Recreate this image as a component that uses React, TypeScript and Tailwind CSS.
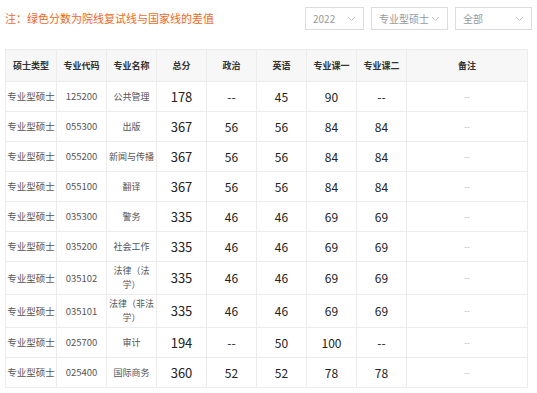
import React from "react";

type Row = {
  type: string;
  code: string;
  name: string[];
  total: string;
  politics: string;
  english: string;
  major1: string;
  major2: string;
  tall?: boolean;
};

const ROWS: Row[] = [
  { type: "专业型硕士", code: "125200", name: ["公共管理"], total: "178", politics: "--", english: "45", major1: "90", major2: "--" },
  { type: "专业型硕士", code: "055300", name: ["出版"], total: "367", politics: "56", english: "56", major1: "84", major2: "84" },
  { type: "专业型硕士", code: "055200", name: ["新闻与传播"], total: "367", politics: "56", english: "56", major1: "84", major2: "84" },
  { type: "专业型硕士", code: "055100", name: ["翻译"], total: "367", politics: "56", english: "56", major1: "84", major2: "84" },
  { type: "专业型硕士", code: "035300", name: ["警务"], total: "335", politics: "46", english: "46", major1: "69", major2: "69" },
  { type: "专业型硕士", code: "035200", name: ["社会工作"], total: "335", politics: "46", english: "46", major1: "69", major2: "69" },
  { type: "专业型硕士", code: "035102", name: ["法律（法", "学）"], total: "335", politics: "46", english: "46", major1: "69", major2: "69", tall: true },
  { type: "专业型硕士", code: "035101", name: ["法律（非法", "学）"], total: "335", politics: "46", english: "46", major1: "69", major2: "69", tall: true },
  { type: "专业型硕士", code: "025700", name: ["审计"], total: "194", politics: "--", english: "50", major1: "100", major2: "--" },
  { type: "专业型硕士", code: "025400", name: ["国际商务"], total: "360", politics: "52", english: "52", major1: "78", major2: "78" },
];

const HEADERS = ["硕士类型", "专业代码", "专业名称", "总分", "政治", "英语", "专业课一", "专业课二", "备注"];
const WIDTHS = ["w-[51px]", "w-[50px]", "w-[50px]", "w-[50px]", "w-[50px]", "w-[50px]", "w-[50px]", "w-[50px]", ""];

function Select({ label, width }: { label: string; width: string }) {
  return (
    <div className={`${width} h-[23px] border border-[#dcdcdc] bg-white flex items-center justify-between px-[7px] text-[10px] text-[#999]`}>
      <span>{label}</span>
      <svg width="9" height="6" viewBox="0 0 9 6" fill="none">
        <path d="M1 1l3.5 3.5L8 1" stroke="#c4c4c4" strokeWidth="1" />
      </svg>
    </div>
  );
}

export default function App() {
  return (
    <div
      className="w-[537px] h-[393px] bg-white overflow-hidden"
      style={{ fontFamily: '"Noto Sans CJK SC", "Noto Sans", sans-serif' }}
    >
      <div className="flex items-center justify-between pl-[5px] pr-[5px] pt-[7px]">
        <span className="text-[11px] text-[#f0691e] leading-none">注：绿色分数为院线复试线与国家线的差值</span>
        <div className="flex gap-[7px]">
          <Select label="2022" width="w-[59px]" />
          <Select label="专业型硕士" width="w-[77px]" />
          <Select label="全部" width="w-[77px]" />
        </div>
      </div>

      <table className="ml-[5px] mt-[19px] w-[523px] border-collapse table-fixed">
        <thead>
          <tr className="h-[32px] bg-[#f7f7f7]">
            {HEADERS.map((h, i) => (
              <th
                key={h}
                className={`${WIDTHS[i]} border border-[#ececec] text-[9px] font-bold text-[#333] text-center p-0`}
              >
                {h}
              </th>
            ))}
          </tr>
        </thead>
        <tbody>
          {ROWS.map((r) => (
            <tr key={r.code} className={r.tall ? "h-[33px]" : "h-[30px]"}>
              <td className="border border-[#ececec] text-center text-[9.5px] text-[#555] p-0">{r.type}</td>
              <td className="border border-[#ececec] text-center text-[9.5px] text-[#555] p-0">{r.code}</td>
              <td className="border border-[#ececec] text-center text-[9px] text-[#555] p-0 leading-[14px]">
                {r.name.map((line) => (
                  <div key={line} className="whitespace-nowrap">
                    {line}
                  </div>
                ))}
              </td>
              <td className="border border-[#ececec] text-center text-[13px] text-[#222] p-0">{r.total}</td>
              <td className="border border-[#ececec] text-center text-[12px] text-[#222] p-0">{r.politics}</td>
              <td className="border border-[#ececec] text-center text-[12px] text-[#222] p-0">{r.english}</td>
              <td className="border border-[#ececec] text-center text-[12px] text-[#222] p-0">{r.major1}</td>
              <td className="border border-[#ececec] text-center text-[12px] text-[#222] p-0">{r.major2}</td>
              <td className="border border-[#ececec] text-center text-[8px] text-[#aaa] p-0">--</td>
            </tr>
          ))}
        </tbody>
      </table>
    </div>
  );
}
